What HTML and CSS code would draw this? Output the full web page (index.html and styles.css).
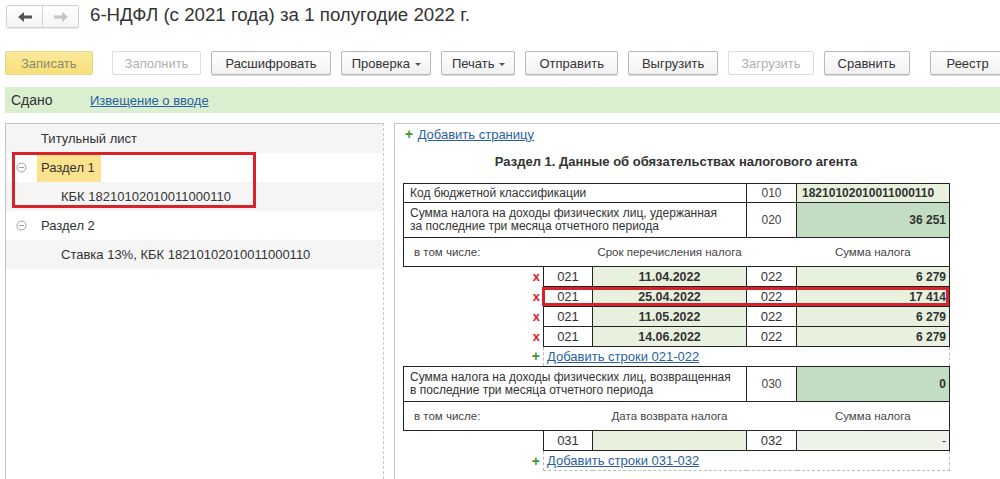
FILE: index.html
```html
<!DOCTYPE html>
<html lang="ru">
<head>
    <meta charset="UTF-8">
    <title>6-НДФЛ</title>
    <link rel="stylesheet" href="styles.css">
</head>
<body>
    <div class="header">
        <div class="nav">
            <span class="nav-btn">
                <svg width="14" height="10" viewBox="0 0 14 10"><path d="M0 5 L6 0 L6 3.5 L14 3.5 L14 6.5 L6 6.5 L6 10 Z" fill="#555"/></svg>
            </span>
            <span class="nav-btn">
                <svg width="14" height="10" viewBox="0 0 14 10"><path d="M14 5 L8 0 L8 3.5 L0 3.5 L0 6.5 L8 6.5 L8 10 Z" fill="#c4c4c4"/></svg>
            </span>
        </div>
        <h1 class="title">6-НДФЛ (с 2021 года) за 1 полугодие 2022 г.</h1>
    </div>

    <div class="toolbar">
        <button class="btn btn-save">Записать</button>
        <button class="btn disabled gap-l">Заполнить</button>
        <button class="btn">Расшифровать</button>
        <button class="btn drop">Проверка<span class="caret"></span></button>
        <button class="btn drop">Печать<span class="caret"></span></button>
        <button class="btn">Отправить</button>
        <button class="btn">Выгрузить</button>
        <button class="btn disabled">Загрузить</button>
        <button class="btn">Сравнить</button>
        <button class="btn gap-l wide">Реестр</button>
    </div>

    <div class="status">
        <span class="status-text">Сдано</span>
        <a class="link" href="#">Извещение о вводе</a>
    </div>

    <div class="main">
        <div class="tree">
            <div class="tree-row odd"><span class="tree-icon"></span><span class="tree-label">Титульный лист</span></div>
            <div class="tree-row"><span class="tree-icon"><svg width="11" height="11" viewBox="0 0 11 11"><circle cx="5.5" cy="5.5" r="4.5" fill="none" stroke="#a0a0a0"/><path d="M3 5.5 H8" stroke="#a0a0a0"/></svg></span><span class="tree-label selected">Раздел 1</span></div>
            <div class="tree-row odd"><span class="tree-icon"></span><span class="tree-label child">КБК 18210102010011000110</span></div>
            <div class="tree-row"><span class="tree-icon"><svg width="11" height="11" viewBox="0 0 11 11"><circle cx="5.5" cy="5.5" r="4.5" fill="none" stroke="#a0a0a0"/><path d="M3 5.5 H8" stroke="#a0a0a0"/></svg></span><span class="tree-label">Раздел 2</span></div>
            <div class="tree-row odd"><span class="tree-icon"></span><span class="tree-label child">Ставка 13%, КБК 18210102010011000110</span></div>
            <div class="mark mark-tree"></div>
        </div>

        <div class="form">
            <div class="add-page"><span class="plus">+</span> <a class="link" href="#">Добавить страницу</a></div>
            <div class="sheet">
                <h2 class="sheet-title">Раздел 1. Данные об обязательствах налогового агента</h2>

                <div class="block">
                    <table class="grid">
                        <colgroup><col class="c-lbl"><col class="c-code"><col class="c-date"><col class="c-code2"><col class="c-sum"></colgroup>
                        <tr class="r-kbk">
                            <td class="b lbl" colspan="3">Код бюджетной классификации</td>
                            <td class="b code">010</td>
                            <td class="b val light">18210102010011000110</td>
                        </tr>
                        <tr class="r-two">
                            <td class="b lbl" colspan="3">Сумма налога на доходы физических лиц, удержанная<br>за последние три месяца отчетного периода</td>
                            <td class="b code">020</td>
                            <td class="b num dark">36 251</td>
                        </tr>
                        <tr class="r-head">
                            <td class="hl">в том числе:</td>
                            <td class="hm"></td>
                            <td class="hm cap">Срок перечисления налога</td>
                            <td class="hm"></td>
                            <td class="hr cap">Сумма налога</td>
                        </tr>
                        <tr class="r-sub">
                            <td class="del">x</td><td class="b scode">021</td><td class="b date light">11.04.2022</td><td class="b scode">022</td><td class="b num light">6 279</td>
                        </tr>
                        <tr class="r-sub">
                            <td class="del">x</td><td class="b scode">021</td><td class="b date light">25.04.2022</td><td class="b scode">022</td><td class="b num light">17 414</td>
                        </tr>
                        <tr class="r-sub">
                            <td class="del">x</td><td class="b scode">021</td><td class="b date light">11.05.2022</td><td class="b scode">022</td><td class="b num light">6 279</td>
                        </tr>
                        <tr class="r-sub">
                            <td class="del">x</td><td class="b scode">021</td><td class="b date light">14.06.2022</td><td class="b scode">022</td><td class="b num light">6 279</td>
                        </tr>
                        <tr class="r-add">
                            <td class="plus-cell"><span class="plus">+</span></td>
                            <td class="add-cell" colspan="4"><a class="link" href="#">Добавить строки 021-022</a></td>
                        </tr>
                    </table>
                    <div class="mark mark-row"></div>
                </div>

                <table class="grid">
                    <colgroup><col class="c-lbl"><col class="c-code"><col class="c-date"><col class="c-code2"><col class="c-sum"></colgroup>
                    <tr class="r-ret">
                        <td class="b lbl" colspan="3">Сумма налога на доходы физических лиц, возвращенная<br>в последние три месяца отчетного периода</td>
                        <td class="b code">030</td>
                        <td class="b num dark">0</td>
                    </tr>
                    <tr class="r-head">
                        <td class="hl">в том числе:</td>
                        <td class="hm"></td>
                        <td class="hm cap">Дата возврата налога</td>
                        <td class="hm"></td>
                        <td class="hr cap">Сумма налога</td>
                    </tr>
                    <tr class="r-sub">
                        <td class="del"></td><td class="b scode">031</td><td class="b date light"></td><td class="b scode">032</td><td class="b num pale">-</td>
                    </tr>
                    <tr class="r-add last">
                        <td class="plus-cell"><span class="plus">+</span></td>
                        <td class="add-cell" colspan="4"><a class="link" href="#">Добавить строки 031-032</a></td>
                    </tr>
                </table>
            </div>
        </div>
    </div>
</body>
</html>
```

FILE: styles.css
```css
body {
    margin: 0;
    font-family: "Liberation Sans", Arial, sans-serif;
    color: #333;
    background: #fff;
    width: 1000px;
    height: 479px;
    overflow: hidden;
}
.header {
    display: flex;
    align-items: center;
    padding: 5px 0 0 6px;
    height: 23px;
}
.nav {
    display: flex;
    border: 1px solid #cfcfcf;
    border-radius: 2px;
    box-shadow: 0 1px 1px rgba(0, 0, 0, 0.08);
    height: 21px;
}
.nav-btn {
    width: 35px;
    display: flex;
    align-items: center;
    justify-content: center;
    background: linear-gradient(#fff, #f4f4f4);
}
.nav-btn + .nav-btn {
    border-left: 1px solid #d6d6d6;
}
.title {
    margin: 0 0 0 11px;
    font-size: 18.7px;
    font-weight: normal;
    color: #333;
    position: relative;
    top: -2px;
}
.toolbar {
    display: flex;
    gap: 10px;
    padding: 23px 0 0 5px;
}
.btn {
    height: 24px;
    padding: 0 13px;
    font-family: inherit;
    font-size: 13px;
    color: #333;
    background: linear-gradient(#ffffff, #f1f1f1);
    border: 1px solid #b8b8b8;
    border-radius: 2px;
    box-shadow: 0 1px 1px rgba(0, 0, 0, 0.15);
    white-space: nowrap;
}
.btn.drop {
    padding: 0 9px 0 10px;
}
.btn.gap-l {
    margin-left: 10px;
}
.btn.wide {
    padding: 0 16px;
}
.btn.disabled {
    color: #b0b0b0;
    border-color: #dcdcdc;
    box-shadow: none;
    background: #fff;
    padding: 0 12px;
}
.btn.disabled.gap-l {
    margin-left: 9px;
}
.btn-save {
    color: #8d8a6c;
    background: linear-gradient(#fbe99a, #f8df79);
    border-color: #e8d68c;
    box-shadow: none;
    padding: 0 15px;
}
.caret {
    display: inline-block;
    width: 0;
    height: 0;
    border-left: 3px solid transparent;
    border-right: 3px solid transparent;
    border-top: 3px solid #555;
    vertical-align: middle;
    margin-left: 5px;
}
.status {
    display: flex;
    align-items: center;
    margin: 12px 0 0 5px;
    height: 26px;
    background: #d9efcf;
}
.status-text {
    font-size: 14px;
    margin-left: 6px;
    width: 79px;
}
.link {
    color: #2a5fa4;
    text-decoration: underline;
    font-size: 13px;
}
.main {
    display: flex;
    margin-top: 10px;
    height: 356px;
}
.tree {
    position: relative;
    margin-left: 5px;
    width: 377px;
    border-top: 1px solid #c4c4c4;
    border-left: 1px solid #c4c4c4;
    border-right: 1px dashed #c8c8c8;
}
.tree-row {
    display: flex;
    align-items: center;
    height: 29px;
    font-size: 13px;
    color: #333;
}
.tree-row.odd {
    background: #f5f5f5;
}
.tree-icon {
    width: 31px;
    display: flex;
    justify-content: center;
    padding-right: 4px;
}
.tree-label {
    line-height: 29px;
    padding: 0 4px 0 0;
}
.tree-label.selected {
    background: #fbe38d;
    padding: 0 6px 0 4px;
    margin-left: -4px;
}
.tree-label.child {
    padding-left: 20px;
}
.mark {
    position: absolute;
    border: 3px solid #d8222c;
}
.mark-tree {
    left: 6px;
    top: 28px;
    width: 238px;
    height: 50px;
}
.form {
    flex: 1;
    margin-left: 10px;
    border-top: 1px solid #c4c4c4;
    border-left: 1px solid #c4c4c4;
    padding-left: 8px;
}
.add-page {
    height: 19px;
    line-height: 19px;
    padding-left: 2px;
}
.plus {
    color: #3c9a2c;
    font-weight: bold;
    font-size: 14px;
}
.sheet {
    width: 546px;
}
.sheet-title {
    margin: 11px 0 14px;
    text-align: center;
    font-size: 13px;
    font-weight: bold;
    color: #333;
}
.block {
    position: relative;
}
.grid {
    width: 546px;
    border-collapse: collapse;
    table-layout: fixed;
    font-size: 12px;
}
.c-lbl { width: 140px; }
.c-code { width: 49px; }
.c-date { width: 154px; }
.c-code2 { width: 50px; }
.c-sum { width: 153px; }
.grid td {
    padding: 0;
}
.grid td.b {
    border: 1px solid #222;
}
.r-kbk td {
    height: 18px;
}
.r-two td, .r-ret td {
    height: 34px;
}
.lbl {
    padding-left: 6px !important;
    line-height: 13px;
    color: #333;
}
.code {
    text-align: center;
    color: #444;
}
.val {
    font-weight: bold;
    padding-left: 5px !important;
}
.num {
    text-align: right;
    font-weight: bold;
    padding-right: 3px !important;
}
.light {
    background: #e8f0de;
}
.dark {
    background: #c2ddc1;
}
.pale {
    background: #edf3e8;
    font-weight: normal;
}
.r-head td {
    height: 28px;
    border-bottom: 1px solid #222;
    font-size: 11.5px;
    color: #444;
}
.hl {
    border-left: 1px solid #222;
    padding-left: 10px !important;
}
.hr {
    border-right: 1px solid #222;
}
.cap {
    text-align: center;
}
.r-sub td {
    height: 19px;
}
.del {
    text-align: right;
    padding-right: 3px !important;
    color: #d8222c;
    font-weight: bold;
    font-size: 13px;
}
.scode {
    text-align: center;
    font-size: 13px;
    color: #333;
}
.date {
    text-align: center;
    font-weight: bold;
    font-size: 12.5px;
}
.r-add td {
    height: 19px;
}
.plus-cell {
    text-align: right;
    padding-right: 3px !important;
}
.add-cell {
    border-left: 1px dashed #bbb;
    border-right: 1px dashed #bbb;
    padding-left: 3px !important;
}
.r-add.last .add-cell {
    border-bottom: 1px dashed #bbb;
}
.mark-row {
    left: 139px;
    top: 104px;
    width: 401px;
    height: 13px;
}
```
